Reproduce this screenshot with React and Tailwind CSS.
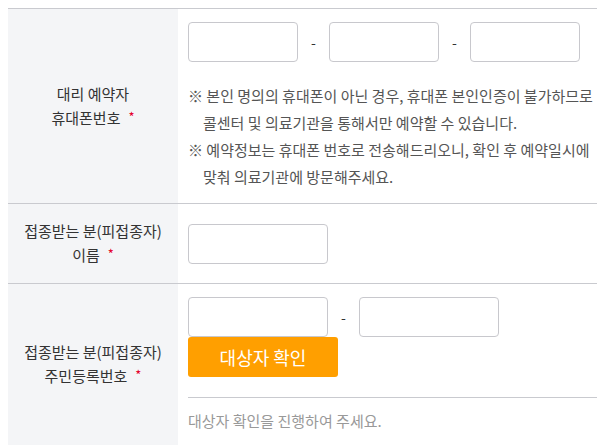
import React from 'react';

const font = { fontFamily: '"Noto Sans CJK KR", "Noto Sans", sans-serif' };

function Required() {
    return <span className="ml-[8px] relative -top-[2px] text-[13px] text-[#e5002b]">*</span>;
}

function Label({ lines }) {
    return (
        <div className="w-[170px] shrink-0 bg-[#f4f5f7] flex flex-col items-center justify-center text-center py-[15px] text-[15px] leading-[24px] text-[#333]">
            <div>{lines[0]}</div>
            <div>
                {lines[1]}
                <Required />
            </div>
        </div>
    );
}

function Field({ w = 'w-[110px]' }) {
    return <input type="text" className={`${w} h-[40px] border border-[#c8c8cd] rounded-[4px] bg-white outline-none`} />;
}

function Dash() {
    return <span className="w-[31px] text-center text-[14px] text-[#333]">-</span>;
}

export default function App() {
    return (
        <div className="w-[597px] h-[445px] overflow-hidden bg-white pl-2 pt-2" style={font}>
            <div className="border-t border-[#c9cacf]">
                {/* 대리 예약자 휴대폰번호 */}
                <div className="flex border-b border-[#c9cacf]">
                    <Label lines={['대리 예약자', '휴대폰번호']} />
                    <div className="flex-1 pl-[10px] pt-[13px] pb-[13px]">
                        <div className="flex items-center">
                            <Field />
                            <Dash />
                            <Field />
                            <Dash />
                            <Field />
                        </div>
                        <div className="mt-[20px] text-[15px] leading-[27px] text-[#555] whitespace-nowrap">
                            <p className="pl-[15px] -indent-[15px]">
                                ※ 본인 명의의 휴대폰이 아닌 경우, 휴대폰 본인인증이 불가하므로
                                <br />
                                콜센터 및 의료기관을 통해서만 예약할 수 있습니다.
                            </p>
                            <p className="pl-[15px] -indent-[15px]">
                                ※ 예약정보는 휴대폰 번호로 전송해드리오니, 확인 후 예약일시에
                                <br />
                                맞춰 의료기관에 방문해주세요.
                            </p>
                        </div>
                    </div>
                </div>

                {/* 이름 */}
                <div className="flex border-b border-[#c9cacf]">
                    <Label lines={['접종받는 분(피접종자)', '이름']} />
                    <div className="flex-1 pl-[10px] flex items-center">
                        <Field w="w-[140px]" />
                    </div>
                </div>

                {/* 주민등록번호 */}
                <div className="flex border-b border-[#c9cacf]">
                    <Label lines={['접종받는 분(피접종자)', '주민등록번호']} />
                    <div className="flex-1 pl-[10px] pt-[13px]">
                        <div className="flex items-center">
                            <Field w="w-[140px]" />
                            <Dash />
                            <Field w="w-[140px]" />
                        </div>
                        <button className="w-[150px] h-[40px] bg-[#ff9f00] rounded-[3px] text-white text-[18px]">
                            대상자 확인
                        </button>
                        <div className="mt-[20px] border-t border-[#c9cacf] pt-[11px] pb-[12px] text-[15px] leading-[24px] text-[#999]">
                            대상자 확인을 진행하여 주세요.
                        </div>
                    </div>
                </div>
            </div>
        </div>
    );
}
